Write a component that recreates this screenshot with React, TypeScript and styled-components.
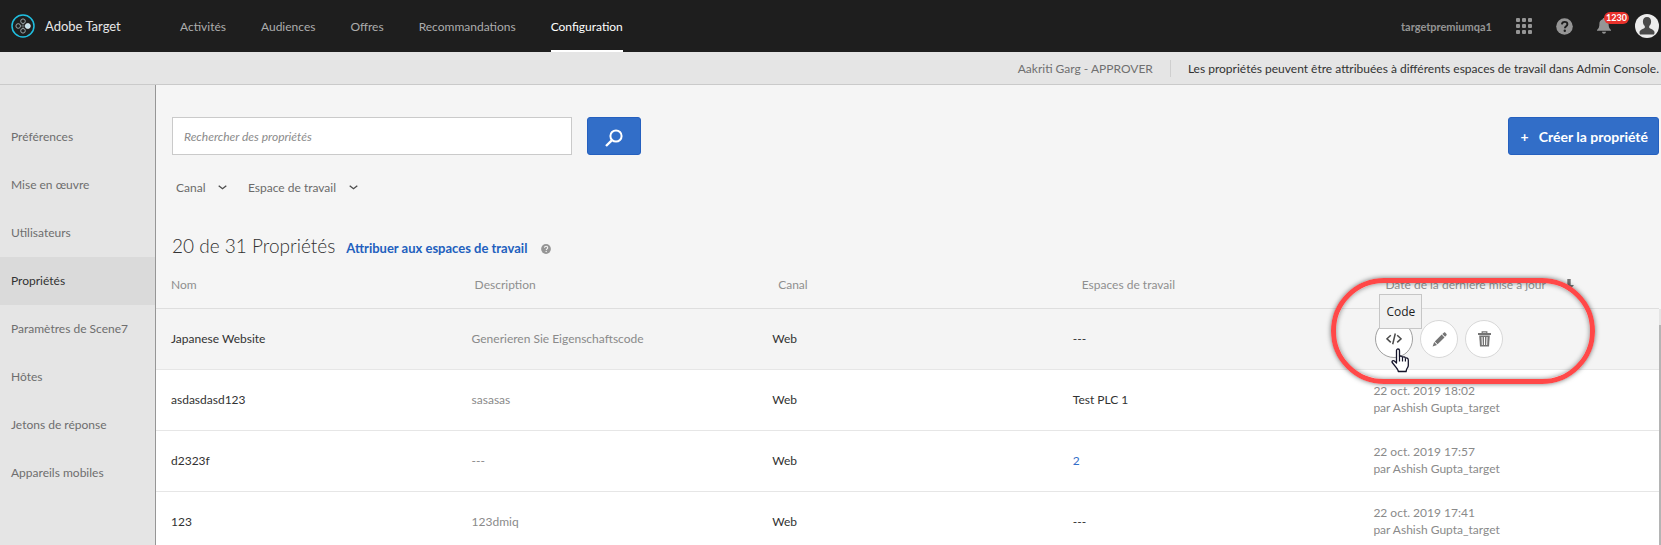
import React from 'react';
import styled, { createGlobalStyle, css } from 'styled-components';

const GlobalStyle = createGlobalStyle`
  *, *::before, *::after { box-sizing: border-box; }
  body { margin: 0; }
  body, button, input, select, table {
    font-family: Lato, 'Open Sans', sans-serif;
    font-size: 12px;
    line-height: 17px;
  }
  button, select { cursor: pointer; }
`;

const Shell = styled.div`
  display: flex;
  flex-direction: column;
  height: 100vh;
  overflow: hidden;
  background: #f5f5f5;
  color: #323232;
`;

const TopBar = styled.header`
  display: flex;
  flex: none;
  align-items: center;
  height: 52px;
  padding: 0 2px 0 11px;
  background: #1e1e1e;
`;

const Brand = styled.a`
  display: flex;
  align-items: center;
  gap: 10px;
  width: 169px;
  color: #e6e6e6;
  font-size: 13px;
  text-decoration: none;
`;

const Nav = styled.nav`
  display: flex;
  flex: 1;
  align-self: stretch;
  gap: 35px;
`;

const NavLink = styled.a<{ $active?: boolean }>`
  display: flex;
  align-items: center;
  border-top: 2px solid transparent;
  border-bottom: 2px solid ${p => (p.$active ? '#fff' : 'transparent')};
  color: ${p => (p.$active ? '#fff' : '#adadad')};
  text-decoration: none;
`;

const Tools = styled.div`
  display: flex;
  align-items: center;
  gap: 24px;
`;

const Organisation = styled.span`
  color: #959595;
  font-size: 11px;
  font-weight: 700;
`;

const IconButton = styled.button`
  position: relative;
  display: flex;
  padding: 0;
  border: 0;
  background: none;
  color: #959595;
`;

const Badge = styled.span`
  position: absolute;
  top: -6px;
  left: 7px;
  padding: 0 2px;
  border-radius: 6px;
  background: #e8322c;
  color: #fff;
  font-size: 9px;
  font-weight: 700;
  line-height: 12px;
`;

const InfoBar = styled.div`
  display: flex;
  flex: none;
  align-items: center;
  justify-content: flex-end;
  height: 33px;
  padding-right: 2px;
  border-bottom: 1px solid #cacaca;
  background: #e5e5e5;
`;

const Role = styled.span`
  padding-right: 17px;
  border-right: 1px solid #cfcfcf;
  color: #707070;
`;

const Notice = styled.span`
  padding-left: 17px;
`;

const Body = styled.div`
  display: flex;
  flex: 1;
  min-height: 0;
`;

const SideNav = styled.nav`
  flex: none;
  width: 156px;
  padding-top: 28px;
  border-right: 1px solid #969696;
  background: #e5e5e5;
`;

const SideLink = styled.a<{ $active?: boolean }>`
  display: flex;
  align-items: center;
  height: 48px;
  padding: 0 0 2px 11px;
  background: ${p => (p.$active ? '#dadada' : 'transparent')};
  color: ${p => (p.$active ? '#323232' : '#6e6e6e')};
  text-decoration: none;
`;

const Main = styled.main`
  flex: 1;
  min-width: 0;
  padding-top: 32px;
`;

const SearchRow = styled.div`
  display: flex;
  padding: 0 2px 0 16px;
`;

const SearchForm = styled.form`
  display: flex;
  flex: 1;
  gap: 15px;
`;

const SearchInput = styled.input`
  width: 400px;
  height: 38px;
  padding: 0 11px;
  border: 1px solid #cacaca;
  background: #fff;
  color: #323232;
  &::placeholder {
    color: #8a8a8a;
    font-style: italic;
    opacity: 1;
  }
`;

const primary = css`
  display: flex;
  align-items: center;
  justify-content: center;
  height: 38px;
  border: 1px solid #2560bf;
  border-radius: 3px;
  background: #326ec8;
  color: #fff;
`;

const SearchButton = styled.button`
  ${primary}
  width: 54px;
  padding: 3px 0 0;
`;

const CreateButton = styled.button`
  ${primary}
  gap: 10px;
  padding: 0 10px 0 12px;
  font-size: 14px;
  font-weight: 700;
`;

const Filters = styled.div`
  display: flex;
  gap: 21px;
  margin: 20px 0 32px;
  padding-left: 20px;
`;

const Filter = styled.label`
  display: flex;
  align-items: center;
  gap: 12px;
  height: 24px;
  color: #4b4b4b;
`;

const FilterSelect = styled.select`
  appearance: none;
  padding: 0;
  border: 0;
  background: none;
  color: #6b6b6b;
`;

const TitleRow = styled.div`
  display: flex;
  align-items: baseline;
  height: 32px;
  padding-left: 16px;
`;

const Title = styled.h1`
  margin: 0;
  font-size: 19px;
  font-weight: 300;
  line-height: 30px;
`;

const AssignLink = styled.a`
  margin: 0 14px 0 11px;
  color: #2260be;
  font-size: 13px;
  font-weight: 700;
  text-decoration: none;
`;

const HelpButton = styled(IconButton)`
  align-self: center;
  padding-top: 3px;
`;

const TableArea = styled.div`
  display: grid;
  grid-template-columns: 1fr 2px;
`;

const Table = styled.table`
  width: 100%;
  border-collapse: separate;
  border-spacing: 0;
  table-layout: fixed;
`;

const HeadCell = styled.th<{ $index: number }>`
  height: 46px;
  padding: 0 0 2px ${p => 15 + p.$index * 3}px;
  border-bottom: 1px solid #dedede;
  color: #8f8f8f;
  font-weight: 400;
  text-align: left;
`;

const SortButton = styled.button`
  display: flex;
  align-items: center;
  gap: 18px;
  padding: 0;
  border: 0;
  background: none;
  color: inherit;
`;

const Row = styled.tr<{ $hovered?: boolean }>`
  background: ${p => (p.$hovered ? '#f4f4f4' : '#fff')};
`;

const Cell = styled.td<{ $muted?: boolean }>`
  height: 61px;
  padding: 0 0 2px 15px;
  border-bottom: 1px solid #e6e6e6;
  color: ${p => (p.$muted ? '#8a8a8a' : '#323232')};
`;

const CountLink = styled.a`
  color: #326ec8;
  text-decoration: none;
`;

const ScrollTrack = styled.div`
  margin-top: 46px;
  padding-top: 16px;
  background: #e4e4e4;
`;

const ScrollThumb = styled.div`
  height: 100%;
  background: #b4b4b4;
`;

const Actions = styled.div`
  position: relative;
  display: flex;
  gap: 7px;
  padding: 2px 0 0 2px;
`;

const ActionButton = styled.button<{ $hovered?: boolean }>`
  display: flex;
  align-items: center;
  justify-content: center;
  width: 38px;
  height: 38px;
  padding: 0;
  border: 1px solid ${p => (p.$hovered ? '#a0a0a0' : '#d8d8d8')};
  border-radius: 50%;
  background: #fff;
  color: ${p => (p.$hovered ? '#4b4b4b' : '#747474')};
`;

const Tooltip = styled.span`
  position: absolute;
  top: -24px;
  left: 6px;
  padding: 8px 6px;
  border: 1px solid #c6c6c6;
  background: #f1f1f1;
  color: #1e1e1e;
  font-family: 'Open Sans', sans-serif;
`;

const Pointer = styled.svg`
  position: absolute;
  top: 30px;
  left: 18px;
  pointer-events: none;
`;

const Highlight = styled.div`
  position: absolute;
  top: -40px;
  left: -42px;
  width: 264px;
  height: 106px;
  border: 5px solid #ff4848;
  border-radius: 53px;
  box-shadow: 0 0 5px rgba(0, 0, 0, 0.55), inset 0 0 5px rgba(0, 0, 0, 0.45);
  pointer-events: none;
`;

const Logo = () => (
  <svg width="24" height="24" viewBox="0 0 24 24" fill="none" aria-hidden="true">
    <circle cx="12" cy="12" r="11" stroke="#20bfe0" strokeWidth="1.5" />
    <path d="M12 9v6M9.5 12h5" stroke="#70797c" strokeWidth="0.8" />
    <g stroke="#9aa5a8" strokeWidth="1">
      <circle cx="12" cy="7.2" r="2.3" />
      <circle cx="7.2" cy="12" r="2.3" />
      <circle cx="12" cy="16.8" r="2.3" />
    </g>
    <circle cx="16.8" cy="12" r="2.5" fill="#c3e0ea" stroke="#e4eef2" strokeWidth="0.8" />
  </svg>
);

const AppsIcon = () => (
  <svg width="16" height="16" viewBox="0 0 16 16" fill="currentColor" aria-hidden="true">
    {[0, 6, 12].map(y => [0, 6, 12].map(x => <rect key={`${x}-${y}`} x={x} y={y} width="4" height="4" rx="1" />))}
  </svg>
);

const HelpIcon = ({ size, mark }: { size: number; mark: string }) => (
  <svg width={size} height={size} viewBox="0 0 17 17" aria-hidden="true">
    <circle cx="8.5" cy="8.5" r="8.3" fill="currentColor" />
    <path d="M5.9 6.4C6 4.8 7 3.9 8.7 3.9c1.6 0 2.7.9 2.7 2.3 0 2-2.5 2-2.5 4" fill="none" stroke={mark} strokeWidth="1.9" />
    <circle cx="8.8" cy="12.7" r="1.2" fill={mark} />
  </svg>
);

const BellIcon = () => (
  <svg width="14" height="16" viewBox="0 0 14 16" fill="currentColor" aria-hidden="true">
    <path d="M7 0c.8 0 1.3.5 1.3 1.200 2.300.6 3.300 2.300 3.300 4.600 0 3 .6 4.600 2.400 6.200v.8H0V12c1.800-1.600 2.400-3.200 2.400-6.200 0-2.300 1-4 3.300-4.600C5.700.5 6.200 0 7 0zM5 13.800h4C8.900 15 8.100 15.700 7 15.700S5.100 15 5 13.800z" />
  </svg>
);

const AvatarIcon = () => (
  <svg width="24" height="24" viewBox="0 0 24 24" aria-hidden="true">
    <circle cx="12" cy="12" r="12" fill="#ececec" />
    <path d="M12 3c2.700 0 4.100 1.900 4.100 4.500 0 1.900-.8 3.600-1.900 4.600v1.600c.3.900 5 1.700 5.300 4.300.1 1.100-.1 2-.6 2.600H5.100c-.5-.6-.7-1.500-.6-2.600.3-2.600 5-3.400 5.300-4.300v-1.600C8.700 11.100 7.900 9.400 7.900 7.500 7.900 4.900 9.300 3 12 3z" fill="#4a4a4a" />
  </svg>
);

const SearchIcon = () => (
  <svg width="18" height="18" viewBox="0 0 18 18" fill="none" stroke="#fff" aria-hidden="true">
    <circle cx="11" cy="7" r="5.6" strokeWidth="2" />
    <path d="M7 11.2L1 17" strokeWidth="2.4" />
  </svg>
);

const ChevronIcon = () => (
  <svg width="9" height="5" viewBox="0 0 9 5" fill="none" stroke="currentColor" strokeWidth="1.3" aria-hidden="true">
    <path d="M.7.7l3.800 3L8.300.7" />
  </svg>
);

const SortIcon = () => (
  <svg width="10" height="12" viewBox="0 0 10 12" fill="#747474" aria-hidden="true">
    <path d="M3.300 0h3.400v6H10l-5 6-5-6h3.300z" />
  </svg>
);

const CodeIcon = () => (
  <svg width="16" height="12" viewBox="0 0 16 12" fill="none" stroke="currentColor" strokeWidth="1.5" aria-hidden="true">
    <path d="M4.800 2.200L1 5.800l3.800 3.600M11.200 2.200L15 5.800l-3.800 3.600M9.300.5L6.700 11.300" />
  </svg>
);

const PencilIcon = () => (
  <svg width="15" height="15" viewBox="0 0 15 15" fill="currentColor" aria-hidden="true">
    <path d="M11.500.9c.7-.7 1.300-.7 1.900-.1l.9.9c.6.600.5 1.200-.1 1.900l-1.100 1.100L10.300 2zM9.700 2.600l2.800 2.800-6.900 6.900-2.800-2.800zM2.200 10.100l2.800 2.800L.6 14.500z" />
  </svg>
);

const TrashIcon = () => (
  <svg width="13" height="16" viewBox="0 0 13 16" fill="none" aria-hidden="true">
    <path d="M4.200 2V.8h4.600V2" stroke="currentColor" strokeWidth="1.2" />
    <path d="M0 2h13v2H0z" fill="currentColor" />
    <path d="M1.200 4.500h10.600L11 15.500H2z" fill="currentColor" />
    <path d="M4 6l.3 8M6.500 6v8M9 6l-.3 8" stroke="#fff" strokeWidth="1" />
  </svg>
);

const HandPointer = () => (
  <Pointer width="19" height="25" viewBox="0 0 19 25" aria-hidden="true">
    <path
      d="M5.500 15V2.500c0-2 3-2 3 0v6c.8-.8 2.700-.6 3 .8.900-.8 2.600-.4 2.900.9 1-.6 2.900 0 2.900 1.700v5.500c0 1.800-1.400 3-1.800 4.200l-.4 1.900H7.300c0-1.600-1-2.300-2-3.800L1.200 14.500c-.7-1.400 1-2.500 2.200-1.400z"
      fill="#fff"
      stroke="#14142a"
      strokeWidth="1.3"
      strokeLinejoin="round"
    />
    <path d="M8.500 8.500v5M11.500 9.500v4M14.400 10.500v3" stroke="#14142a" strokeWidth="1.2" />
  </Pointer>
);

const NAV = ['Activités', 'Audiences', 'Offres', 'Recommandations', 'Configuration'];

const SIDE_NAV = [
  'Préférences',
  'Mise en œuvre',
  'Utilisateurs',
  'Propriétés',
  'Paramètres de Scene7',
  'Hôtes',
  'Jetons de réponse',
  'Appareils mobiles',
];

const COLUMNS = ['Nom', 'Description', 'Canal', 'Espaces de travail'];

type Property = {
  name: string;
  description: string;
  channel: string;
  workspaces: string | number;
  updated?: string;
};

const PROPERTIES: Property[] = [
  { name: 'Japanese Website', description: 'Generieren Sie Eigenschaftscode', channel: 'Web', workspaces: '---' },
  { name: 'asdasdasd123', description: 'sasasas', channel: 'Web', workspaces: 'Test PLC 1', updated: '22 oct. 2019 18:02' },
  { name: 'd2323f', description: '---', channel: 'Web', workspaces: 2, updated: '22 oct. 2019 17:57' },
  { name: '123', description: '123dmiq', channel: 'Web', workspaces: '---', updated: '22 oct. 2019 17:41' },
];

const RowActions = () => (
  <Actions>
    <ActionButton $hovered aria-label="Afficher le code"><CodeIcon /></ActionButton>
    <ActionButton aria-label="Modifier"><PencilIcon /></ActionButton>
    <ActionButton aria-label="Supprimer"><TrashIcon /></ActionButton>
    <Tooltip role="tooltip">Code</Tooltip>
    <HandPointer />
    <Highlight />
  </Actions>
);

export default function App() {
  return (
    <Shell>
      <GlobalStyle />
      <TopBar>
        <Brand href="#"><Logo />Adobe Target</Brand>
        <Nav>
          {NAV.map(item => (
            <NavLink key={item} href="#" $active={item === 'Configuration'}>{item}</NavLink>
          ))}
        </Nav>
        <Tools>
          <Organisation>targetpremiumqa1</Organisation>
          <IconButton aria-label="Applications"><AppsIcon /></IconButton>
          <IconButton aria-label="Aide"><HelpIcon size={17} mark="#1e1e1e" /></IconButton>
          <IconButton aria-label="Notifications"><BellIcon /><Badge>1230</Badge></IconButton>
          <IconButton aria-label="Profil"><AvatarIcon /></IconButton>
        </Tools>
      </TopBar>
      <InfoBar>
        <Role>Aakriti Garg - APPROVER</Role>
        <Notice>Les propriétés peuvent être attribuées à différents espaces de travail dans Admin Console.</Notice>
      </InfoBar>
      <Body>
        <SideNav>
          {SIDE_NAV.map(item => (
            <SideLink key={item} href="#" $active={item === 'Propriétés'}>{item}</SideLink>
          ))}
        </SideNav>
        <Main>
          <SearchRow>
            <SearchForm onSubmit={e => e.preventDefault()}>
              <SearchInput aria-label="Rechercher des propriétés" placeholder="Rechercher des propriétés" />
              <SearchButton aria-label="Rechercher"><SearchIcon /></SearchButton>
            </SearchForm>
            <CreateButton><span>+</span>Créer la propriété</CreateButton>
          </SearchRow>
          <Filters>
            {['Canal', 'Espace de travail'].map(name => (
              <Filter key={name}>
                <FilterSelect aria-label={name}><option>{name}</option></FilterSelect>
                <ChevronIcon />
              </Filter>
            ))}
          </Filters>
          <TitleRow>
            <Title>20 de 31 Propriétés</Title>
            <AssignLink href="#">Attribuer aux espaces de travail</AssignLink>
            <HelpButton aria-label="Aide"><HelpIcon size={10} mark="#f5f5f5" /></HelpButton>
          </TitleRow>
          <TableArea>
            <Table>
              <thead>
                <tr>
                  {COLUMNS.map((name, index) => (
                    <HeadCell key={name} $index={index}>{name}</HeadCell>
                  ))}
                  <HeadCell $index={4}>
                    <SortButton>Date de la dernière mise à jour<SortIcon /></SortButton>
                  </HeadCell>
                </tr>
              </thead>
              <tbody>
                {PROPERTIES.map(row => (
                  <Row key={row.name} $hovered={!row.updated}>
                    <Cell>{row.name}</Cell>
                    <Cell $muted>{row.description}</Cell>
                    <Cell>{row.channel}</Cell>
                    <Cell>
                      {typeof row.workspaces === 'number' ? <CountLink href="#">{row.workspaces}</CountLink> : row.workspaces}
                    </Cell>
                    <Cell $muted>
                      {row.updated ? <>{row.updated}<br />par Ashish Gupta_target</> : <RowActions />}
                    </Cell>
                  </Row>
                ))}
              </tbody>
            </Table>
            <ScrollTrack><ScrollThumb /></ScrollTrack>
          </TableArea>
        </Main>
      </Body>
    </Shell>
  );
}
